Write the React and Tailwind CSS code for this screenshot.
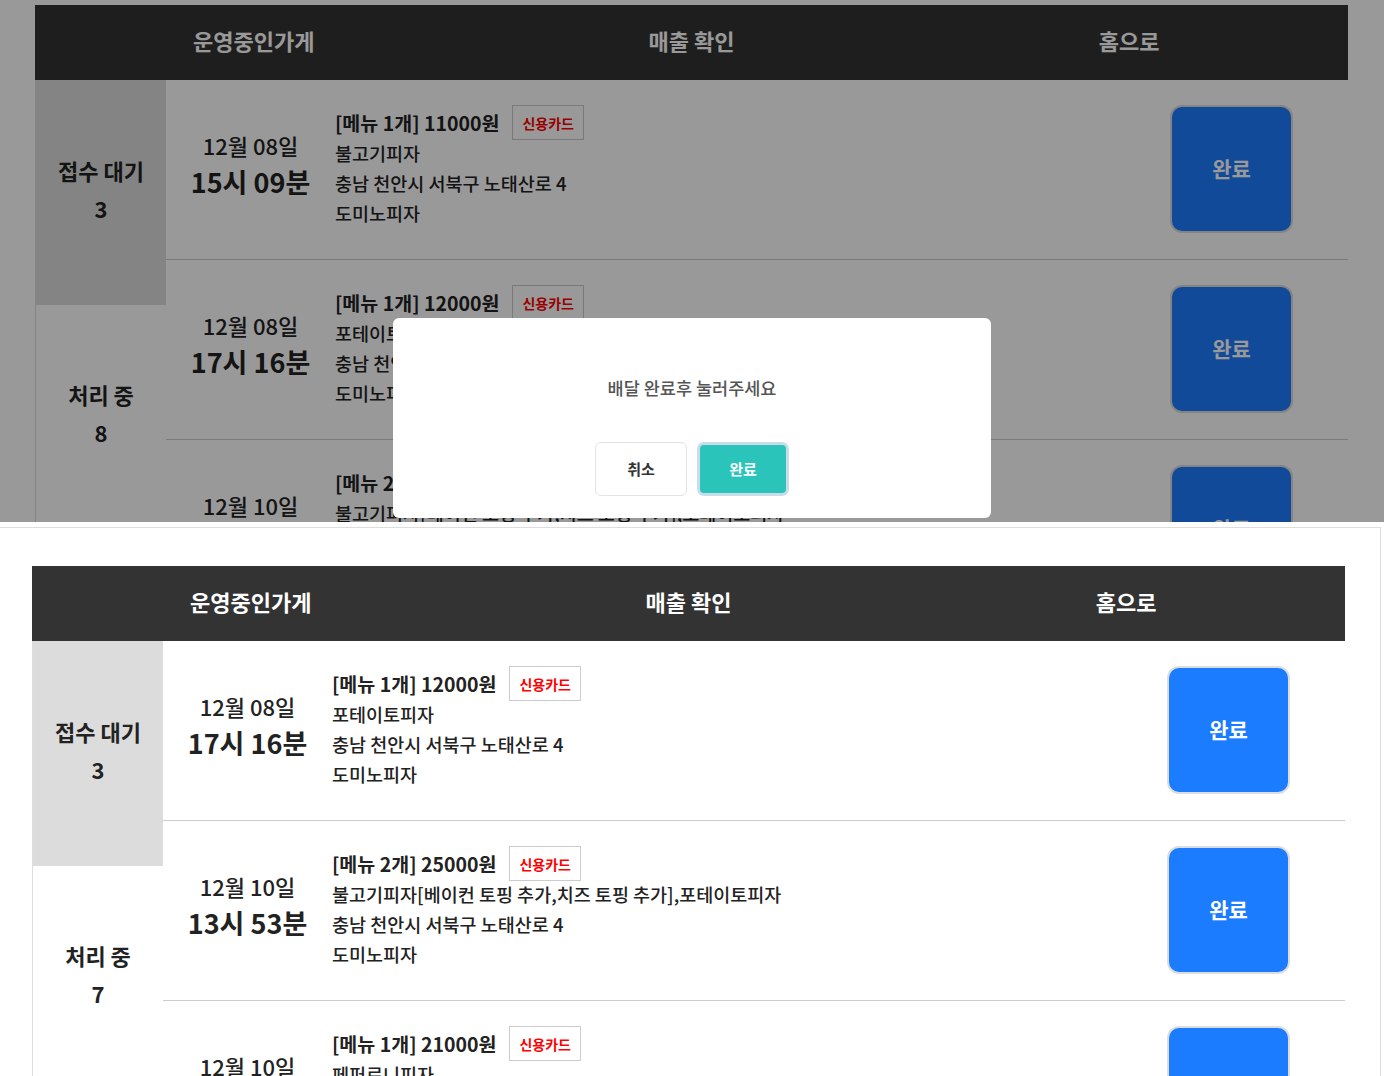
import React from 'react';

const topOrders = [
  { date: '12월 08일', time: '15시 09분', count: 1, price: 11000, menu: '불고기피자', addr: '충남 천안시 서북구 노태산로 4', store: '도미노피자' },
  { date: '12월 08일', time: '17시 16분', count: 1, price: 12000, menu: '포테이토피자', addr: '충남 천안시 서북구 노태산로 4', store: '도미노피자' },
  { date: '12월 10일', time: '13시 53분', count: 2, price: 25000, menu: '불고기피자[베이컨 토핑 추가,치즈 토핑 추가],포테이토피자', addr: '충남 천안시 서북구 노태산로 4', store: '도미노피자' },
];

const bottomOrders = [
  { date: '12월 08일', time: '17시 16분', count: 1, price: 12000, menu: '포테이토피자', addr: '충남 천안시 서북구 노태산로 4', store: '도미노피자' },
  { date: '12월 10일', time: '13시 53분', count: 2, price: 25000, menu: '불고기피자[베이컨 토핑 추가,치즈 토핑 추가],포테이토피자', addr: '충남 천안시 서북구 노태산로 4', store: '도미노피자' },
  { date: '12월 10일', time: '14시 20분', count: 1, price: 21000, menu: '페퍼로니피자', addr: '충남 천안시 서북구 노태산로 4', store: '도미노피자' },
];

const Header = () => (
  <div className="grid grid-cols-3 h-[75px] bg-[#333333] text-white text-[22px] font-bold">
    {['운영중인가게', '매출 확인', '홈으로'].map((t) => (
      <div key={t} className="flex items-center justify-center pb-[4px]">{t}</div>
    ))}
  </div>
);

const Sidebar = ({ waiting, processing }) => (
  <div className="w-[131px] shrink-0 border-l border-[#dddddd] text-[22px] font-bold text-[#222222] leading-[38px]">
    <div className="h-[225px] pb-[8px] bg-[#dcdcdc] flex flex-col items-center justify-center">
      <span>접수 대기</span>
      <span>{waiting}</span>
    </div>
    <div className="h-[220px] pb-[4px] flex flex-col items-center justify-center">
      <span>처리 중</span>
      <span>{processing}</span>
    </div>
  </div>
);

const OrderRow = ({ order }) => (
  <div className="h-[180px] flex items-center border-b border-[#cccccc] text-[#222222]">
    <div className="w-[169px] shrink-0 flex flex-col items-center mb-[10px]">
      <span className="text-[22px] leading-[34px] font-medium">{order.date}</span>
      <span className="text-[27px] leading-[40px] font-bold">{order.time}</span>
    </div>
    <div className="flex-1 flex flex-col mb-[4px] text-[18.5px] leading-[30px] font-medium">
      <div className="flex items-center h-[30px]">
        <span className="text-[19.5px] font-bold">[메뉴 {order.count}개] {order.price}원</span>
        <span className="ml-[13px] h-[35px] px-[9px] flex items-center border border-[#cccccc] bg-white text-[#ff0000] text-[14px] font-bold">
          신용카드
        </span>
      </div>
      <span>{order.menu}</span>
      <span>{order.addr}</span>
      <span>{order.store}</span>
    </div>
    <button className="mr-[55px] mb-[2px] w-[123px] h-[128px] shrink-0 rounded-[12px] border-2 border-[#dddddd] bg-[#1b7cff] text-white text-[21px] font-bold">
      완료
    </button>
  </div>
);

const Page = ({ orders, waiting, processing }) => (
  <div className="w-[1313px]">
    <Header />
    <div className="flex">
      <Sidebar waiting={waiting} processing={processing} />
      <div className="flex-1">
        {orders.map((o, i) => (
          <OrderRow key={i} order={o} />
        ))}
      </div>
    </div>
  </div>
);

export default function App() {
  return (
    <div className="w-[1384px] h-[1076px] overflow-hidden bg-white font-['Noto_Sans_CJK_KR','Noto_Sans',sans-serif]">
      {/* 모달이 열린 상태 */}
      <div className="relative h-[522px] overflow-hidden pt-[5px] pl-[35px]">
        <Page orders={topOrders} waiting={3} processing={8} />
        <div className="absolute inset-0 bg-black/40" />
        <div className="absolute left-[393px] top-[318px] w-[598px] h-[200px] bg-white rounded-[6px] flex flex-col items-center">
          <p className="mt-[58px] text-[17.5px] leading-[24px] font-medium text-[#555555]">배달 완료후 눌러주세요</p>
          <div className="mt-[42px] flex gap-[10px]">
            <button className="w-[92px] h-[54px] rounded-[6px] border border-[#e3e3e3] bg-white text-[#333333] text-[15px] font-bold">
              취소
            </button>
            <button className="w-[92px] h-[54px] rounded-[7px] border-[3px] border-[#c9dcea] bg-[#2bc4bb] text-white text-[15px] font-bold">
              완료
            </button>
          </div>
        </div>
      </div>

      {/* 일반 상태 */}
      <div className="mt-[5px] h-[549px] w-[1381px] overflow-hidden border-t border-r border-[#dddddd] pt-[38px] pl-[32px]">
        <Page orders={bottomOrders} waiting={3} processing={7} />
      </div>
    </div>
  );
}
